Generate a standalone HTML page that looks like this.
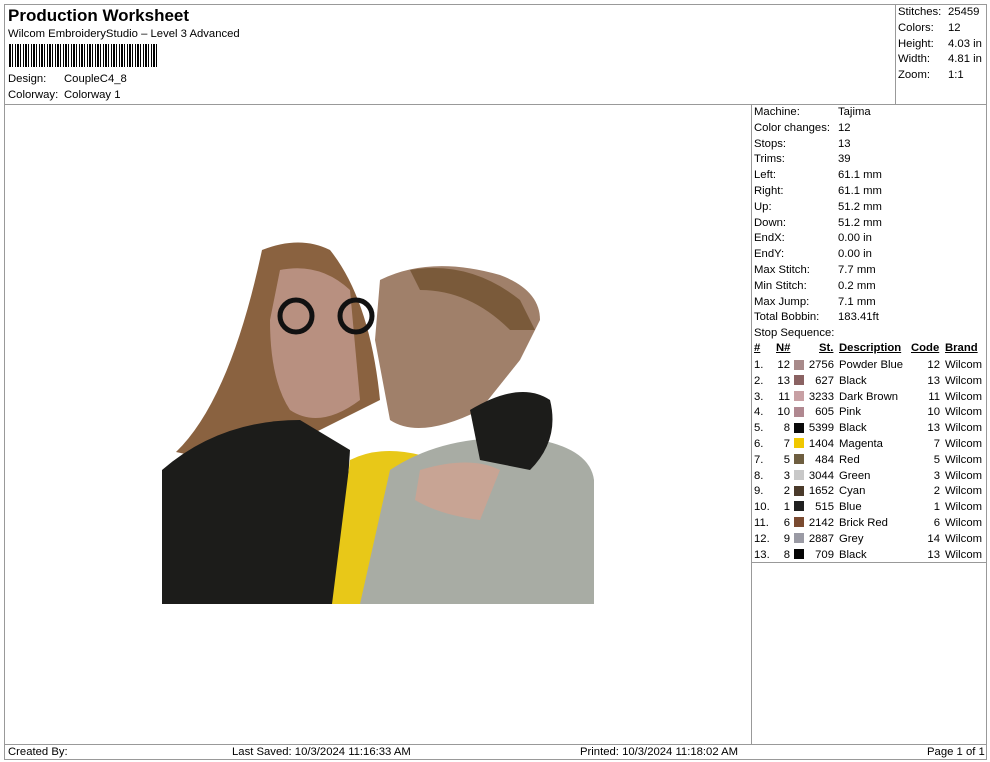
<!DOCTYPE html>
<html><head><style>
body{margin:0;width:990px;height:762px;background:#fff;font-family:"Liberation Sans",Arial,sans-serif;font-size:11.3px;color:#000;position:relative;overflow:hidden}
.a{position:absolute;white-space:nowrap}
.l{position:absolute;background:#999}
.sw{position:absolute;width:10px;height:10px}
</style></head><body>
<div class="l" style="left:4px;top:4px;width:982px;height:1px"></div>
<div class="l" style="left:4px;top:4px;width:1px;height:756px"></div>
<div class="l" style="left:986px;top:4px;width:1px;height:756px"></div>
<div class="l" style="left:4px;top:759px;width:982px;height:1px"></div>
<div class="l" style="left:4px;top:104px;width:982px;height:1px"></div>
<div class="l" style="left:895px;top:4px;width:1px;height:100px"></div>
<div class="l" style="left:751px;top:104px;width:1px;height:640px"></div>
<div class="l" style="left:751px;top:562px;width:235px;height:1px"></div>
<div class="l" style="left:4px;top:744px;width:982px;height:1px"></div>

<div class="a" style="left:8px;top:6px;font-size:17px;font-weight:bold">Production Worksheet</div>
<div class="a" style="left:8px;top:28px">Wilcom EmbroideryStudio – Level 3 Advanced</div>
<div class="a" style="left:9px;top:44px;width:149px;height:23px;background:repeating-linear-gradient(90deg,#000 0 2px,#fff 2px 3px,#000 3px 4px,#fff 4px 6px,#000 6px 7px,#fff 7px 8px)"></div>
<div class="a" style="left:8px;top:73px">Design:</div><div class="a" style="left:64px;top:73px">CoupleC4_8</div>
<div class="a" style="left:8px;top:89px">Colorway:</div><div class="a" style="left:64px;top:89px">Colorway 1</div>

<div class="a" style="left:898px;top:5px;line-height:15.8px">Stitches:<br>Colors:<br>Height:<br>Width:<br>Zoom:</div>
<div class="a" style="left:948px;top:5px;line-height:15.8px">25459<br>12<br>4.03 in<br>4.81 in<br>1:1</div>

<div class="a" style="left:754px;top:105px;line-height:15.8px">Machine:<br>Color changes:<br>Stops:<br>Trims:<br>Left:<br>Right:<br>Up:<br>Down:<br>EndX:<br>EndY:<br>Max Stitch:<br>Min Stitch:<br>Max Jump:<br>Total Bobbin:<br>Stop Sequence:</div>
<div class="a" style="left:838px;top:105px;line-height:15.8px">Tajima<br>12<br>13<br>39<br>61.1 mm<br>61.1 mm<br>51.2 mm<br>51.2 mm<br>0.00 in<br>0.00 in<br>7.7 mm<br>0.2 mm<br>7.1 mm<br>183.41ft</div>

<div class="a" style="left:754px;top:342px;font-weight:bold;text-decoration:underline">#</div>
<div class="a" style="left:776px;top:342px;font-weight:bold;text-decoration:underline">N#</div>
<div class="a" style="left:819px;top:342px;font-weight:bold;text-decoration:underline">St.</div>
<div class="a" style="left:839px;top:342px;font-weight:bold;text-decoration:underline">Description</div>
<div class="a" style="left:911px;top:342px;font-weight:bold;text-decoration:underline">Code</div>
<div class="a" style="left:945px;top:342px;font-weight:bold;text-decoration:underline">Brand</div>

<div class="a" style="left:754px;top:358px;line-height:15.8px">1.<br>2.<br>3.<br>4.<br>5.<br>6.<br>7.<br>8.<br>9.<br>10.<br>11.<br>12.<br>13.</div>
<div class="a" style="left:770px;top:358px;line-height:15.8px;width:20px;text-align:right">12<br>13<br>11<br>10<br>8<br>7<br>5<br>3<br>2<br>1<br>6<br>9<br>8</div>
<div class="a" style="left:804px;top:358px;line-height:15.8px;width:30px;text-align:right">2756<br>627<br>3233<br>605<br>5399<br>1404<br>484<br>3044<br>1652<br>515<br>2142<br>2887<br>709</div>
<div class="a" style="left:839px;top:358px;line-height:15.8px">Powder Blue<br>Black<br>Dark Brown<br>Pink<br>Black<br>Magenta<br>Red<br>Green<br>Cyan<br>Blue<br>Brick Red<br>Grey<br>Black</div>
<div class="a" style="left:915px;top:358px;line-height:15.8px;width:25px;text-align:right">12<br>13<br>11<br>10<br>13<br>7<br>5<br>3<br>2<br>1<br>6<br>14<br>13</div>
<div class="a" style="left:945px;top:358px;line-height:15.8px">Wilcom<br>Wilcom<br>Wilcom<br>Wilcom<br>Wilcom<br>Wilcom<br>Wilcom<br>Wilcom<br>Wilcom<br>Wilcom<br>Wilcom<br>Wilcom<br>Wilcom</div>
<div class="sw" style="left:794px;top:360px;background:#a88a8a"></div>
<div class="sw" style="left:794px;top:375px;background:#8a6262"></div>
<div class="sw" style="left:794px;top:391px;background:#c8a0a4"></div>
<div class="sw" style="left:794px;top:407px;background:#b08890"></div>
<div class="sw" style="left:794px;top:423px;background:#0a0a0a"></div>
<div class="sw" style="left:794px;top:438px;background:#f0c800"></div>
<div class="sw" style="left:794px;top:454px;background:#6e5e40"></div>
<div class="sw" style="left:794px;top:470px;background:#c8c8c8"></div>
<div class="sw" style="left:794px;top:486px;background:#4a3a2a"></div>
<div class="sw" style="left:794px;top:501px;background:#202020"></div>
<div class="sw" style="left:794px;top:517px;background:#7a4a30"></div>
<div class="sw" style="left:794px;top:533px;background:#9a9aa4"></div>
<div class="sw" style="left:794px;top:549px;background:#050505"></div>

<svg class="a" style="left:0;top:0" width="990" height="762">
<path d="M176 452 Q230 400 262 250 Q300 235 330 250 Q370 300 380 400 L300 440 L190 455 Z" fill="#8a6240"/>
<path d="M280 270 Q320 262 350 290 L360 400 Q320 430 290 410 Q270 380 270 320 Z" fill="#b89080"/>
<path d="M380 280 Q430 255 500 275 Q540 290 540 320 L520 360 L480 410 Q420 440 390 420 L375 340 Z" fill="#a0806a"/>
<path d="M410 270 Q470 260 520 300 L535 330 L510 330 Q470 290 420 290 Z" fill="#7a5a3a"/>
<path d="M162 470 Q220 420 300 420 L350 450 L340 604 L162 604 Z" fill="#1c1c1a"/>
<path d="M350 460 Q380 445 420 455 L430 500 L410 604 L332 604 Z" fill="#e8c818"/>
<path d="M390 470 Q450 430 540 440 Q590 450 594 480 L594 604 L360 604 Z" fill="#a8aca4"/>
<path d="M470 410 Q520 380 550 400 Q560 440 530 470 L480 460 Z" fill="#1c1c1a"/>
<path d="M420 470 Q470 455 500 470 L480 520 Q440 515 415 500 Z" fill="#c8a494"/>
<circle cx="296" cy="316" r="16" fill="none" stroke="#111" stroke-width="5"/>
<circle cx="356" cy="316" r="16" fill="none" stroke="#111" stroke-width="5"/>
</svg>

<div class="a" style="left:8px;top:746px">Created By:</div>
<div class="a" style="left:232px;top:746px">Last Saved: 10/3/2024 11:16:33 AM</div>
<div class="a" style="left:580px;top:746px">Printed: 10/3/2024 11:18:02 AM</div>
<div class="a" style="left:927px;top:746px">Page 1 of 1</div>
</body></html>
